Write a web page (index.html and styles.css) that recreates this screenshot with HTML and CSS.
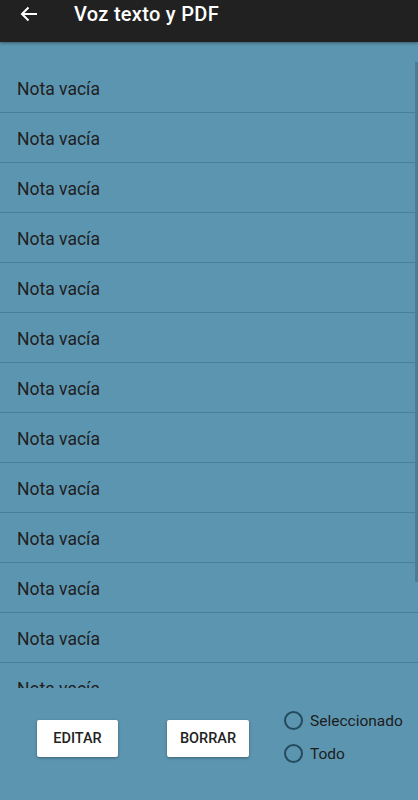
FILE: index.html
```html
<!DOCTYPE html>
<html lang="es">

<head>
	<meta charset="UTF-8">
	<meta name="viewport" content="width=device-width, initial-scale=1.0">
	<title>Voz texto y PDF</title>
	<link rel="stylesheet" href="styles.css">
</head>

<body>

	<div class="toolbar">
		<svg class="back" width="18" height="16" viewBox="0 0 18 16">
			<path d="M17 8H2M8.5 1.5L2 8l6.5 6.5" fill="none" stroke="#fff" stroke-width="2"/>
		</svg>
		<h1>Voz texto y PDF</h1>
	</div>

	<div class="notes">
		<ul class="note-list">
			<li>Nota vacía</li>
			<li>Nota vacía</li>
			<li>Nota vacía</li>
			<li>Nota vacía</li>
			<li>Nota vacía</li>
			<li>Nota vacía</li>
			<li>Nota vacía</li>
			<li>Nota vacía</li>
			<li>Nota vacía</li>
			<li>Nota vacía</li>
			<li>Nota vacía</li>
			<li>Nota vacía</li>
			<li>Nota vacía</li>
		</ul>
		<div class="scroll-thumb"></div>
	</div>

	<div class="actions">
		<button class="btn btn-edit">EDITAR</button>
		<button class="btn btn-delete">BORRAR</button>
		<div class="options">
			<label class="option"><span class="radio"></span>Seleccionado</label>
			<label class="option"><span class="radio"></span>Todo</label>
		</div>
	</div>

</body>

</html>
```

FILE: styles.css
```css
/* Basic reset and styling */
* {
	margin: 0;
	padding: 0;
	box-sizing: border-box;
}

body {
	width: 418px;
	height: 800px;
	overflow: hidden;
	background-color: #5c95b0;
	font-family: Roboto, "Noto Sans", sans-serif;
	color: #1c1c1c;
	display: flex;
	flex-direction: column;
}

.toolbar {
	height: 42px;
	background-color: #212121;
	display: flex;
	align-items: center;
	padding-left: 20px;
	padding-bottom: 14px;
	box-shadow: 0 1px 3px rgba(0, 0, 0, 0.4);
	position: relative;
	z-index: 1;
}

.back {
	flex-shrink: 0;
}

h1 {
	font-size: 20px;
	font-weight: 500;
	color: #fff;
	margin-left: 36px;
	letter-spacing: 0.3px;
}

.notes {
	position: relative;
	height: 646px;
	overflow: hidden;
	padding-top: 21px;
}

.note-list {
	list-style: none;
}

.note-list li {
	height: 50px;
	line-height: 53px;
	padding-left: 17px;
	font-size: 17.5px;
	color: #202020;
	border-bottom: 1px solid #4a7f98;
}

.scroll-thumb {
	position: absolute;
	right: 0;
	top: 20px;
	width: 3px;
	height: 520px;
	background-color: #4d7d94;
}

.actions {
	flex: 1;
	display: flex;
	align-items: center;
	padding-left: 37px;
	padding-bottom: 14px;
}

.btn {
	height: 37px;
	background-color: #fff;
	border: none;
	border-radius: 2px;
	font-family: Roboto, sans-serif;
	font-size: 14.5px;
	font-weight: 500;
	color: #222;
	box-shadow: 0 1px 3px rgba(0, 0, 0, 0.35);
	margin-top: 3px;
}

.btn-edit {
	width: 81px;
}

.btn-delete {
	width: 82px;
	margin-left: 49px;
}

.options {
	display: flex;
	flex-direction: column;
	gap: 14px;
	margin-left: 35px;
}

.option {
	display: flex;
	align-items: center;
	font-size: 15.5px;
	height: 19px;
}

.radio {
	width: 19px;
	height: 19px;
	border: 2px solid #244a5e;
	border-radius: 50%;
	margin-right: 7px;
}
```
